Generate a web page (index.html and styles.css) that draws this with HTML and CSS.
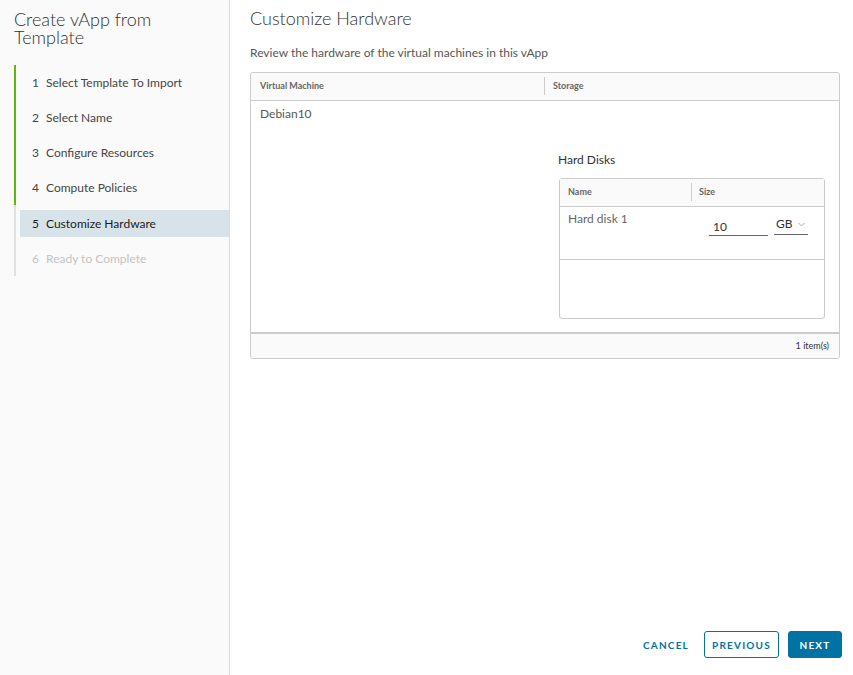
FILE: index.html
```html
<!DOCTYPE html>
<html>
<head>
<title>Create vApp from Template</title>
<meta charset="UTF-8">
<meta name="viewport" content="width=device-width, initial-scale=1.0">
<link rel="stylesheet" href="styles.css">
</head>
<body>
<div class="wizard">
  <div class="sidebar">
    <h2 class="wizard-title">Create vApp from Template</h2>
    <ul class="steps">
      <li class="step done"><span class="num">1</span>Select Template To Import</li>
      <li class="step done"><span class="num">2</span>Select Name</li>
      <li class="step done"><span class="num">3</span>Configure Resources</li>
      <li class="step done"><span class="num">4</span>Compute Policies</li>
      <li class="step active"><span class="num">5</span>Customize Hardware</li>
      <li class="step disabled"><span class="num">6</span>Ready to Complete</li>
    </ul>
  </div>
  <div class="main">
    <h3 class="page-title">Customize Hardware</h3>
    <p class="subtitle">Review the hardware of the virtual machines in this vApp</p>

    <div class="grid">
      <div class="grid-head">
        <div class="cell col-vm">Virtual Machine</div>
        <div class="cell col-storage sep">Storage</div>
      </div>
      <div class="grid-body">
        <div class="grid-row">
          <div class="cell col-vm">Debian10</div>
          <div class="cell col-storage">
            <div class="disks-label">Hard Disks</div>
            <div class="inner-grid">
              <div class="inner-head">
                <div class="icell col-name">Name</div>
                <div class="icell col-size sep">Size</div>
              </div>
              <div class="inner-row">
                <div class="icell col-name">Hard disk 1</div>
                <div class="icell col-size">
                  <div class="size-input">10</div>
                  <div class="unit-select">GB
                    <svg class="caret" width="7" height="5" viewBox="0 0 7 5"><polyline points="0.5,1 3.5,4 6.5,1" fill="none" stroke="#aaaaaa" stroke-width="1"/></svg>
                  </div>
                </div>
              </div>
              <div class="inner-empty"></div>
            </div>
          </div>
        </div>
      </div>
      <div class="grid-foot">1 item(s)</div>
    </div>

    <div class="actions">
      <button class="btn btn-link">Cancel</button>
      <button class="btn btn-outline">Previous</button>
      <button class="btn btn-primary">Next</button>
    </div>
  </div>
</div>
</body>
</html>
```

FILE: styles.css
```css
body {
  margin: 0;
  font-family: Lato, "Noto Sans", sans-serif;
  color: #565656;
  background: #fff;
}
.wizard {
  display: flex;
  height: 675px;
}
.sidebar {
  width: 229px;
  background-color: #fafafa;
  border-right: 1px solid #dddddd;
  flex-shrink: 0;
}
.wizard-title {
  margin: 10px 0 0 14px;
  font-size: 18px;
  font-weight: 300;
  line-height: 18px;
  color: #313131;
  width: 180px;
}
.steps {
  list-style: none;
  margin: 19px 0 0 14px;
  padding: 0;
  border-left: 2px solid #e0e0e0;
}
.step {
  height: 35px;
  line-height: 35px;
  margin-left: 4px;
  padding-left: 12px;
  font-size: 12px;
  color: #454545;
  position: relative;
}
.step .num {
  display: inline-block;
  width: 14px;
}
.step.done::before {
  content: "";
  position: absolute;
  left: -6px;
  top: 0;
  bottom: 0;
  width: 2px;
  background: #60b515;
}
.step.active {
  background: #d8e3e9;
  color: #1b1b1b;
  height: 27px;
  line-height: 27px;
  margin: 5px 0 4px 4px;
}
.step.disabled {
  color: #c4c4c4;
}
.main {
  flex: 1;
  padding: 0 13px 0 20px;
  position: relative;
}
.page-title {
  margin: 8px 0 0 0;
  font-size: 18px;
  font-weight: 300;
  color: #313131;
  line-height: 20px;
}
.subtitle {
  margin: 17px 0 0 0;
  font-size: 12px;
  line-height: 16px;
  color: #565656;
}
.grid {
  margin-top: 11px;
  border: 1px solid #cccccc;
  border-radius: 3px;
  width: 588px;
}
.grid-head {
  display: flex;
  background: #fafafa;
  height: 27px;
  border-bottom: 1px solid #cccccc;
  border-radius: 3px 3px 0 0;
}
.grid-head .cell {
  font-size: 9px;
  font-weight: bold;
  color: #666666;
  line-height: 25px;
}
.cell {
  padding-left: 9px;
  font-size: 12px;
}
.col-vm {
  width: 284px;
}
.col-storage {
  flex: 1;
}
.sep {
  position: relative;
}
.sep::before {
  content: "";
  position: absolute;
  left: 0;
  top: 4px;
  height: 18px;
  width: 1px;
  background: #cccccc;
}
.grid-body {
  height: 231px;
}
.grid-row {
  display: flex;
}
.grid-row .cell.col-vm {
  padding-top: 6px;
  line-height: 14px;
}
.grid-row .col-storage {
  padding-top: 52px;
  padding-left: 14px;
}
.disks-label {
  font-size: 12px;
  color: #313131;
  line-height: 14px;
}
.inner-grid {
  margin-top: 11px;
  margin-left: 1px;
  width: 264px;
  border: 1px solid #cccccc;
  border-radius: 3px;
}
.inner-head {
  display: flex;
  background: #fafafa;
  height: 27px;
  border-bottom: 1px solid #cccccc;
}
.icell {
  padding-left: 8px;
  font-size: 12px;
}
.inner-head .icell {
  font-size: 9px;
  font-weight: bold;
  color: #666666;
  line-height: 25px;
}
.inner-head .col-name, .inner-row .col-name {
  width: 123px;
}
.inner-head .col-size {
  flex: 1;
}
.inner-row {
  display: flex;
  height: 52px;
  border-bottom: 1px solid #cccccc;
}
.inner-row .col-name {
  padding-top: 5px;
  line-height: 14px;
  color: #666666;
}
.inner-row .col-size {
  flex: 1;
  display: flex;
  padding-left: 18px;
  padding-top: 10px;
}
.size-input {
  width: 55px;
  padding-left: 4px;
  height: 16px;
  border-bottom: 1px solid #666666;
  color: #313131;
  font-size: 12px;
  line-height: 16px;
  margin-top: 2px;
}
.unit-select {
  margin-left: 6px;
  width: 32px;
  padding-left: 2px;
  height: 17px;
  border-bottom: 1px solid #666666;
  color: #313131;
  font-size: 12px;
  line-height: 14px;
}
.caret {
  margin-left: 2px;
  vertical-align: 1px;
}
.inner-empty {
  height: 58px;
}
.grid-foot {
  background: #fafafa;
  border-top: 2px solid #cccccc;
  height: 24px;
  line-height: 24px;
  text-align: right;
  padding-right: 10px;
  font-size: 9px;
  color: #313131;
  border-radius: 0 0 3px 3px;
}
.actions {
  position: absolute;
  right: 11px;
  bottom: 17px;
  display: flex;
  gap: 9px;
}
.btn {
  font-family: Lato, "Noto Sans", sans-serif;
  font-size: 10px;
  font-weight: bold;
  letter-spacing: 1.2px;
  text-transform: uppercase;
  height: 27px;
  border-radius: 3px;
  cursor: pointer;
}
.btn-link {
  background: none;
  border: none;
  color: #0072a3;
  padding: 0 6px;
}
.btn-outline {
  background: #fff;
  border: 1px solid #0072a3;
  color: #0072a3;
  width: 75px;
}
.btn-primary {
  background: #0072a3;
  border: 1px solid #0072a3;
  color: #fff;
  width: 54px;
}
```
